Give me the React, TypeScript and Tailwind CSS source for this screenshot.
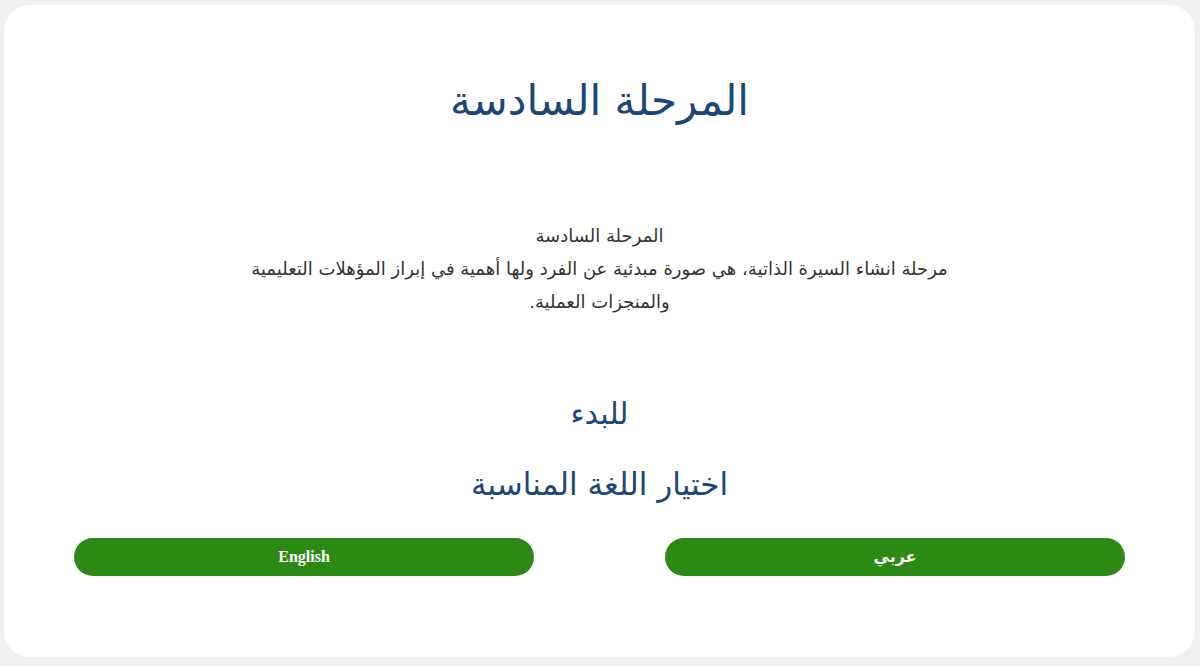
export default function App() {
  const arabic = { fontFamily: '"DejaVu Sans", "Noto Sans Arabic", sans-serif' };

  return (
    <div className="min-h-[666px] w-full bg-[#f1f1f2] pt-[5px] pl-[4px] pr-[5px] pb-[9px]">
      <div
        dir="rtl"
        className="h-[652px] rounded-[26px] bg-white flex flex-col items-center"
        style={arabic}
      >
        <h1 className="mt-[68px] text-[42px] leading-[56px] text-[#1d4673]">المرحلة السادسة</h1>

        <div className="mt-[90px] w-[720px] text-center text-[18px] leading-[33px] text-[#333333]">
          <p>المرحلة السادسة</p>
          <p>
            مرحلة انشاء السيرة الذاتية، هي صورة مبدئية عن الفرد ولها أهمية في إبراز المؤهلات التعليمية
            والمنجزات العملية.
          </p>
        </div>

        <h2 className="mt-[76px] text-[30px] leading-[40px] text-[#1d4673]">للبدء</h2>
        <h2 className="mt-[30px] text-[31px] leading-[40px] text-[#1d4673]">اختيار اللغة المناسبة</h2>

        <div className="mt-[34px] w-full px-[70px] flex justify-between">
          <button
            type="button"
            className="w-[460px] h-[38px] rounded-full bg-[#2a8a14] text-white text-[16px] font-bold"
            style={arabic}
          >
            عربي
          </button>
          <button
            type="button"
            className="w-[460px] h-[38px] rounded-full bg-[#2a8a14] text-white text-[16px] font-bold"
            style={{ fontFamily: '"Liberation Serif", serif' }}
          >
            English
          </button>
        </div>
      </div>
    </div>
  );
}
